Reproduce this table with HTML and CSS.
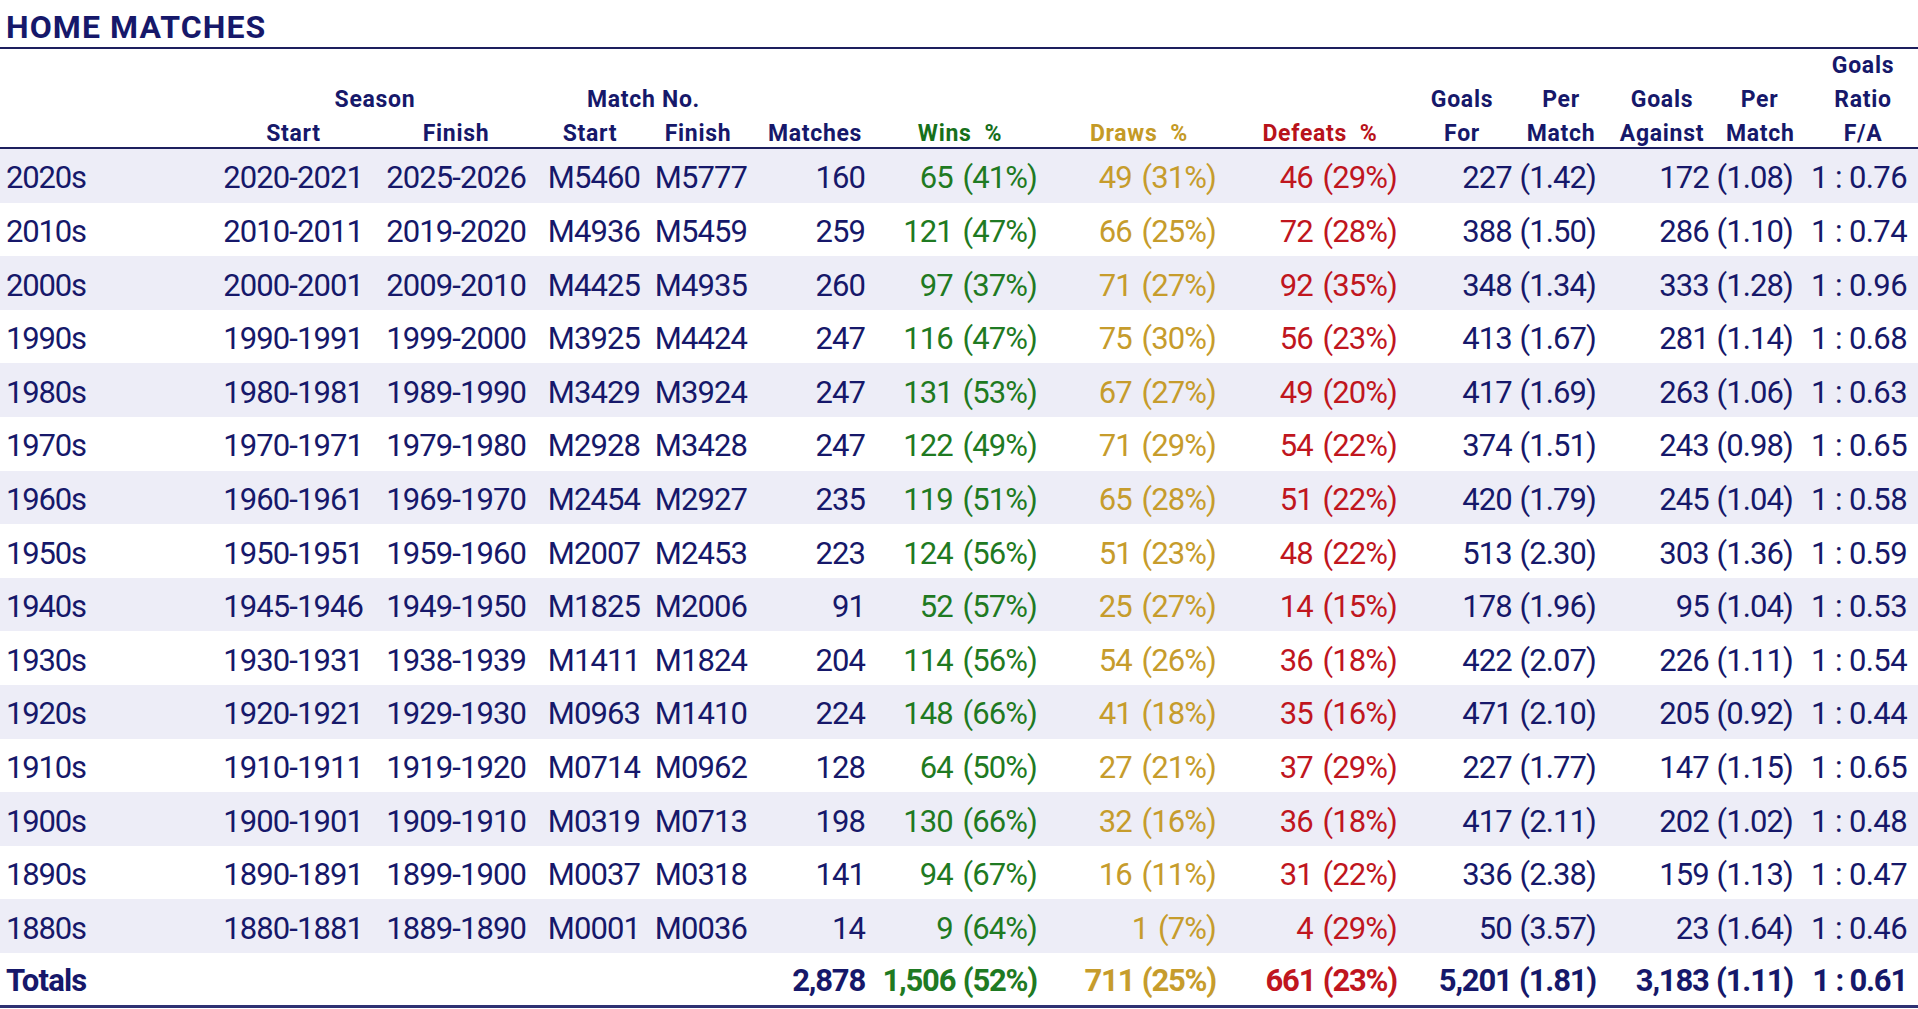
FILE: index.html
```html
<!DOCTYPE html>
<html lang="en">
<head>
<meta charset="utf-8">
<title>Home Matches</title>
<link rel="stylesheet" href="styles.css">
</head>
<body>
<div class="sheet">
  <h1 class="title">HOME MATCHES</h1>
  <div class="head">
    <span class="h h14 r1">Goals</span>
    <span class="h span-season r2">Season</span>
    <span class="h span-match r2">Match No.</span>
    <span class="h h10 r2">Goals</span>
    <span class="h h11 r2">Per</span>
    <span class="h h12 r2">Goals</span>
    <span class="h h13 r2">Per</span>
    <span class="h h14 r2">Ratio</span>
    <span class="h h2 r3">Start</span>
    <span class="h h3 r3">Finish</span>
    <span class="h h4 r3">Start</span>
    <span class="h h5 r3">Finish</span>
    <span class="h h6 r3">Matches</span>
    <span class="h h7 r3 win">Wins  %</span>
    <span class="h h8 r3 draw">Draws  %</span>
    <span class="h h9 r3 loss">Defeats  %</span>
    <span class="h h10 r3">For</span>
    <span class="h h11 r3">Match</span>
    <span class="h h12 r3">Against</span>
    <span class="h h13 r3">Match</span>
    <span class="h h14 r3">F/A</span>
  </div>

  <div class="row alt"><span class="dec">2020s</span><span>2020-2021</span><span>2025-2026</span><span>M5460</span><span>M5777</span><span>160</span><span class="win">65 (41%)</span><span class="draw">49 (31%)</span><span class="loss">46 (29%)</span><span class="dbl">227 (1.42)</span><span class="dbl">172 (1.08)</span><span class="ratio">1 : 0.76</span></div>
  <div class="row"><span class="dec">2010s</span><span>2010-2011</span><span>2019-2020</span><span>M4936</span><span>M5459</span><span>259</span><span class="win">121 (47%)</span><span class="draw">66 (25%)</span><span class="loss">72 (28%)</span><span class="dbl">388 (1.50)</span><span class="dbl">286 (1.10)</span><span class="ratio">1 : 0.74</span></div>
  <div class="row alt"><span class="dec">2000s</span><span>2000-2001</span><span>2009-2010</span><span>M4425</span><span>M4935</span><span>260</span><span class="win">97 (37%)</span><span class="draw">71 (27%)</span><span class="loss">92 (35%)</span><span class="dbl">348 (1.34)</span><span class="dbl">333 (1.28)</span><span class="ratio">1 : 0.96</span></div>
  <div class="row"><span class="dec">1990s</span><span>1990-1991</span><span>1999-2000</span><span>M3925</span><span>M4424</span><span>247</span><span class="win">116 (47%)</span><span class="draw">75 (30%)</span><span class="loss">56 (23%)</span><span class="dbl">413 (1.67)</span><span class="dbl">281 (1.14)</span><span class="ratio">1 : 0.68</span></div>
  <div class="row alt"><span class="dec">1980s</span><span>1980-1981</span><span>1989-1990</span><span>M3429</span><span>M3924</span><span>247</span><span class="win">131 (53%)</span><span class="draw">67 (27%)</span><span class="loss">49 (20%)</span><span class="dbl">417 (1.69)</span><span class="dbl">263 (1.06)</span><span class="ratio">1 : 0.63</span></div>
  <div class="row"><span class="dec">1970s</span><span>1970-1971</span><span>1979-1980</span><span>M2928</span><span>M3428</span><span>247</span><span class="win">122 (49%)</span><span class="draw">71 (29%)</span><span class="loss">54 (22%)</span><span class="dbl">374 (1.51)</span><span class="dbl">243 (0.98)</span><span class="ratio">1 : 0.65</span></div>
  <div class="row alt"><span class="dec">1960s</span><span>1960-1961</span><span>1969-1970</span><span>M2454</span><span>M2927</span><span>235</span><span class="win">119 (51%)</span><span class="draw">65 (28%)</span><span class="loss">51 (22%)</span><span class="dbl">420 (1.79)</span><span class="dbl">245 (1.04)</span><span class="ratio">1 : 0.58</span></div>
  <div class="row"><span class="dec">1950s</span><span>1950-1951</span><span>1959-1960</span><span>M2007</span><span>M2453</span><span>223</span><span class="win">124 (56%)</span><span class="draw">51 (23%)</span><span class="loss">48 (22%)</span><span class="dbl">513 (2.30)</span><span class="dbl">303 (1.36)</span><span class="ratio">1 : 0.59</span></div>
  <div class="row alt"><span class="dec">1940s</span><span>1945-1946</span><span>1949-1950</span><span>M1825</span><span>M2006</span><span>91</span><span class="win">52 (57%)</span><span class="draw">25 (27%)</span><span class="loss">14 (15%)</span><span class="dbl">178 (1.96)</span><span class="dbl">95 (1.04)</span><span class="ratio">1 : 0.53</span></div>
  <div class="row"><span class="dec">1930s</span><span>1930-1931</span><span>1938-1939</span><span>M1411</span><span>M1824</span><span>204</span><span class="win">114 (56%)</span><span class="draw">54 (26%)</span><span class="loss">36 (18%)</span><span class="dbl">422 (2.07)</span><span class="dbl">226 (1.11)</span><span class="ratio">1 : 0.54</span></div>
  <div class="row alt"><span class="dec">1920s</span><span>1920-1921</span><span>1929-1930</span><span>M0963</span><span>M1410</span><span>224</span><span class="win">148 (66%)</span><span class="draw">41 (18%)</span><span class="loss">35 (16%)</span><span class="dbl">471 (2.10)</span><span class="dbl">205 (0.92)</span><span class="ratio">1 : 0.44</span></div>
  <div class="row"><span class="dec">1910s</span><span>1910-1911</span><span>1919-1920</span><span>M0714</span><span>M0962</span><span>128</span><span class="win">64 (50%)</span><span class="draw">27 (21%)</span><span class="loss">37 (29%)</span><span class="dbl">227 (1.77)</span><span class="dbl">147 (1.15)</span><span class="ratio">1 : 0.65</span></div>
  <div class="row alt"><span class="dec">1900s</span><span>1900-1901</span><span>1909-1910</span><span>M0319</span><span>M0713</span><span>198</span><span class="win">130 (66%)</span><span class="draw">32 (16%)</span><span class="loss">36 (18%)</span><span class="dbl">417 (2.11)</span><span class="dbl">202 (1.02)</span><span class="ratio">1 : 0.48</span></div>
  <div class="row"><span class="dec">1890s</span><span>1890-1891</span><span>1899-1900</span><span>M0037</span><span>M0318</span><span>141</span><span class="win">94 (67%)</span><span class="draw">16 (11%)</span><span class="loss">31 (22%)</span><span class="dbl">336 (2.38)</span><span class="dbl">159 (1.13)</span><span class="ratio">1 : 0.47</span></div>
  <div class="row alt"><span class="dec">1880s</span><span>1880-1881</span><span>1889-1890</span><span>M0001</span><span>M0036</span><span>14</span><span class="win">9 (64%)</span><span class="draw">1 (7%)</span><span class="loss">4 (29%)</span><span class="dbl">50 (3.57)</span><span class="dbl">23 (1.64)</span><span class="ratio">1 : 0.46</span></div>
  <div class="row totals"><span class="dec tot-label">Totals</span><span class="tot-matches">2,878</span><span class="win">1,506 (52%)</span><span class="draw">711 (25%)</span><span class="loss">661 (23%)</span><span class="dbl">5,201 (1.81)</span><span class="dbl">3,183 (1.11)</span><span class="ratio">1 : 0.61</span></div>
</div>
</body>
</html>
```

FILE: styles.css
```css
* { box-sizing: border-box; }

html, body {
  margin: 0;
  padding: 0;
  background: #ffffff;
}

body {
  font-family: Roboto, "Liberation Sans", sans-serif;
  color: #16186a;
}

.sheet {
  width: 1918px;
}

.title {
  margin: 0;
  height: 49px;
  padding: 7px 0 0 6px;
  font-size: 32px;
  line-height: 40px;
  font-weight: 700;
  letter-spacing: 1.1px;
  color: #16186a;
  border-bottom: 2px solid #1d1f5e;
}

.head,
.row {
  display: grid;
  grid-template-columns: 210px 153px 163px 114px 107px 118px 172px 179px 181px 107px 92px 116px 81px 125px;
}

.head {
  grid-template-rows: 34px 34px 30px;
  border-bottom: 2px solid #1d1f5e;
}

.h {
  font-size: 23px;
  line-height: 34px;
  font-weight: 700;
  letter-spacing: 0.7px;
  text-align: center;
  white-space: pre;
  color: #16186a;
}

.r1 { grid-row: 1; }
.r2 { grid-row: 2; }
.r3 { grid-row: 3; }

.span-season { grid-column: 2 / 4; padding-left: 14px; }
.span-match  { grid-column: 4 / 6; padding-left: 14px; }

.h2  { grid-column: 2;  padding-left: 14px; }
.h3  { grid-column: 3;  padding-left: 23px; }
.h4  { grid-column: 4;  padding-left: 14px; }
.h5  { grid-column: 5;  padding-left: 9px; }
.h6  { grid-column: 6;  padding-left: 18px; }
.h7  { grid-column: 7;  padding-left: 18px; }
.h8  { grid-column: 8;  padding-left: 25px; }
.h9  { grid-column: 9;  padding-left: 27px; }
.h10 { grid-column: 10; padding-left: 23px; }
.h11 { grid-column: 11; padding-left: 22px; }
.h12 { grid-column: 12; padding-left: 16px; }
.h13 { grid-column: 13; padding-left: 14px; }
.h14 { grid-column: 14; padding-left: 26px; padding-right: 11px; }

.row {
  height: 53.6px;
}

.row.alt {
  background: #ededf7;
}

.row > span {
  font-size: 31px;
  line-height: 48px;
  padding-top: 5.4px;
  letter-spacing: -0.9px;
  text-align: right;
  white-space: nowrap;
}

.row > .dec {
  text-align: left;
  padding-left: 6px;
  letter-spacing: -1.2px;
}

.row > .win,
.row > .draw,
.row > .loss {
  word-spacing: 3px;
}

.row > .dbl {
  grid-column: span 2;
  word-spacing: 1px;
}

.row > .ratio {
  padding-right: 11px;
  letter-spacing: -0.6px;
}

.win  { color: #1f7a22; }
.draw { color: #c69c2c; }
.loss { color: #c0161e; }

.h.win  { color: #17701b; }
.h.draw { color: #c49a26; }
.h.loss { color: #b8121a; }

.row.totals {
  height: 55px;
  border-bottom: 3px solid #2e3173;
}

.row.totals > span {
  font-weight: 700;
  padding-top: 4.5px;
  letter-spacing: -1.2px;
}

.row.totals > .win,
.row.totals > .draw,
.row.totals > .loss {
  word-spacing: 1px;
}

.row.totals > .tot-label {
  grid-column: 1 / 6;
  letter-spacing: -0.8px;
}

.row.totals > .tot-matches {
  grid-column: 6;
}
```
